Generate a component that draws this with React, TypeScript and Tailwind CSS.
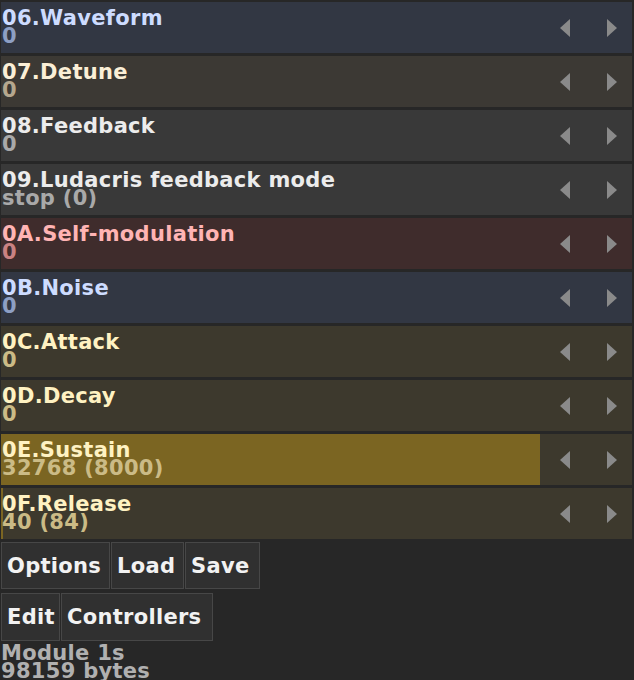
import React from 'react'

type Tone = 'blue' | 'brown' | 'gray' | 'red' | 'yellow'

interface Param {
  name: string
  value: string
  tone: Tone
  fill?: number
}

const tones: Record<Tone, { bg: string; title: string; value: string }> = {
  blue: { bg: 'bg-[#323743]', title: 'text-[#cddcff]', value: 'text-[#8d9fc4]' },
  brown: { bg: 'bg-[#3c3934]', title: 'text-[#fbefd6]', value: 'text-[#b5a78e]' },
  gray: { bg: 'bg-[#393939]', title: 'text-[#ececec]', value: 'text-[#a9a9a9]' },
  red: { bg: 'bg-[#3f2c2c]', title: 'text-[#ffb4b4]', value: 'text-[#c98282]' },
  yellow: { bg: 'bg-[#3d392d]', title: 'text-[#fff2c2]', value: 'text-[#cbbb86]' },
}

const params: Param[] = [
  { name: '06.Waveform', value: '0', tone: 'blue' },
  { name: '07.Detune', value: '0', tone: 'brown' },
  { name: '08.Feedback', value: '0', tone: 'gray' },
  { name: '09.Ludacris feedback mode', value: 'stop (0)', tone: 'gray' },
  { name: '0A.Self-modulation', value: '0', tone: 'red' },
  { name: '0B.Noise', value: '0', tone: 'blue' },
  { name: '0C.Attack', value: '0', tone: 'yellow' },
  { name: '0D.Decay', value: '0', tone: 'yellow' },
  { name: '0E.Sustain', value: '32768 (8000)', tone: 'yellow', fill: 85.4 },
  { name: '0F.Release', value: '40 (84)', tone: 'yellow', fill: 0.35 },
]

function Arrow({ dir }: { dir: 'left' | 'right' }) {
  return (
    <svg width="10" height="18" viewBox="0 0 10 18">
      <polygon points={dir === 'left' ? '10,0 10,18 0,9' : '0,0 0,18 10,9'} fill="#8a8a8a" />
    </svg>
  )
}

function Row({ p }: { p: Param }) {
  const t = tones[p.tone]
  return (
    <div className={`relative flex h-[51px] items-center ${t.bg}`}>
      {p.fill !== undefined && (
        <div className="absolute inset-y-0 left-0 bg-[#7b6522]" style={{ width: `${p.fill}%` }} />
      )}
      <div className="relative flex-1 self-start pl-[1px] pt-[7px]">
        <div className={`whitespace-nowrap ${t.title}`}>{p.name}</div>
        <div className={`whitespace-nowrap ${t.value}`}>{p.value}</div>
      </div>
      <div className="relative flex items-center gap-[37px] pr-[15px]">
        <Arrow dir="left" />
        <Arrow dir="right" />
      </div>
    </div>
  )
}

function Btn({ label, w }: { label: string; w: string }) {
  return (
    <div className={`flex h-full items-center border border-[#474747] bg-[#303030] pl-[5px] text-[#f2f2f2] ${w}`}>
      {label}
    </div>
  )
}

export default function App() {
  return (
    <div
      className="h-[680px] w-[634px] overflow-hidden bg-[#272727] text-[21px] font-bold leading-[18px] tracking-[0.3px]"
      style={{ fontFamily: '"DejaVu Sans", "Noto Sans", sans-serif' }}
    >
      <div className="flex flex-col gap-[3px] pl-[1px] pr-[2px] pt-[2px]">
        {params.map((p) => (
          <Row key={p.name} p={p} />
        ))}
      </div>

      {/* Buttons */}
      <div className="mt-[3px] flex h-[47px] gap-[1px] pl-[1px]">
        <Btn label="Options" w="w-[109px]" />
        <Btn label="Load" w="w-[73px]" />
        <Btn label="Save" w="w-[75px]" />
      </div>
      <div className="mt-[4px] flex h-[48px] gap-[1px] pl-[1px]">
        <Btn label="Edit" w="w-[59px]" />
        <Btn label="Controllers" w="w-[152px]" />
      </div>

      <div className="pl-[1px] pt-[3px] text-[#b0b0b0]">
        <div>Module 1s</div>
        <div>98159 bytes</div>
      </div>
    </div>
  )
}
